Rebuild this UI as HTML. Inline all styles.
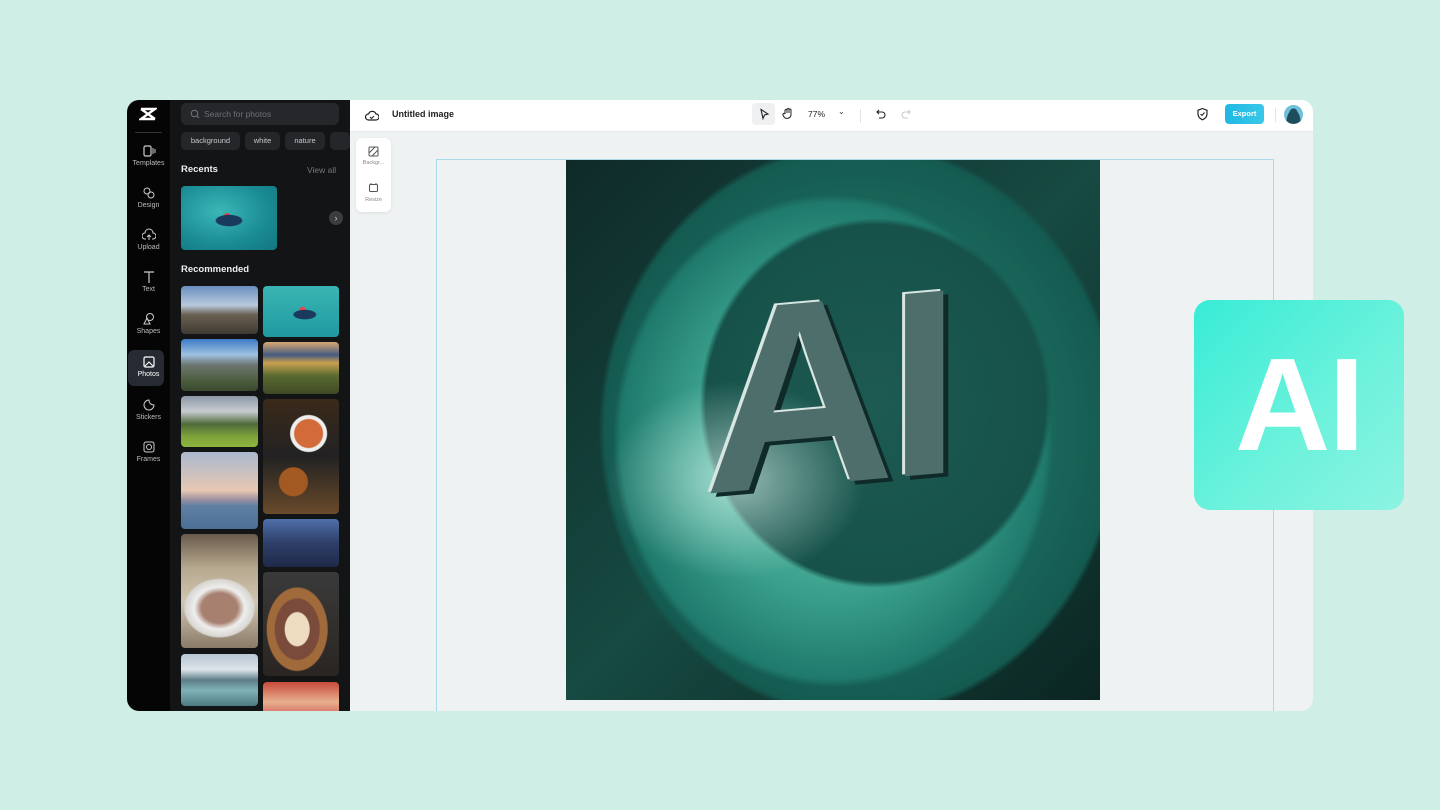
<!DOCTYPE html>
<html><head><meta charset="utf-8"><style>
*{margin:0;padding:0;box-sizing:border-box}
body{width:1440px;height:810px;background:#cfeee6;font-family:"Liberation Sans",sans-serif;position:relative;overflow:hidden}
.app{position:absolute;left:127px;top:100px;width:1186px;height:611px;border-radius:12px;overflow:hidden;background:#eef2f3}
.rail{position:absolute;left:0;top:0;width:43px;height:611px;background:#050505}
.panel{position:absolute;left:43px;top:0;width:180px;height:611px;background:#131416}
.top{position:absolute;left:223px;top:0;right:0;height:32px;background:#fff;border-bottom:1px solid #e6eaec}
.ri{position:absolute;left:0;width:43px;text-align:center;color:#bbb;font-size:7px}
.ri svg{display:block;margin:0 auto 2px}
.ph{position:absolute;border-radius:4px;overflow:hidden}
.chip{position:absolute;top:32px;height:18px;border-radius:5px;background:#24262a;color:#c8c8c8;font-size:7.5px;line-height:18px;text-align:center}
</style></head><body>
<div class="app">
 <div class="rail">
  <svg style="position:absolute;left:12px;top:7px" width="18" height="14" viewBox="0 0 18 14"><path d="M2 2h14L2 12h14M2 2l14 10" stroke="#fff" stroke-width="2.4" fill="none"/></svg>
  <div style="position:absolute;left:8px;top:32px;width:27px;height:1px;background:#333"></div>
  <div class="ri" style="top:44px"><svg width="14" height="14" viewBox="0 0 14 14"><rect x="2" y="2" width="7" height="10" rx="1.5" stroke="#ccc" fill="none" stroke-width="1.2"/><path d="M11 4v6M13 5v4" stroke="#ccc"/></svg>Templates</div>
  <div class="ri" style="top:86px"><svg width="14" height="14" viewBox="0 0 14 14"><circle cx="5" cy="5" r="3" stroke="#ccc" fill="none"/><circle cx="9" cy="9" r="3" stroke="#ccc" fill="none"/></svg>Design</div>
  <div class="ri" style="top:128px"><svg width="14" height="14" viewBox="0 0 14 14"><path d="M4 11H3a3 3 0 0 1 0-6 4 4 0 0 1 8 0 3 3 0 0 1 0 6h-1M7 12V7M5 9l2-2 2 2" stroke="#ccc" fill="none"/></svg>Upload</div>
  <div class="ri" style="top:170px"><svg width="14" height="14" viewBox="0 0 14 14"><path d="M2 2h10M7 2v11" stroke="#ccc" fill="none" stroke-width="1.2"/></svg>Text</div>
  <div class="ri" style="top:212px"><svg width="14" height="14" viewBox="0 0 14 14"><circle cx="8" cy="5" r="3.5" stroke="#ccc" fill="none"/><path d="M2 12l3-6 3 6z" stroke="#ccc" fill="none"/></svg>Shapes</div>
  <div style="position:absolute;left:1px;top:250px;width:36px;height:36px;border-radius:6px;background:#262b33"></div>
  <div class="ri" style="top:255px;color:#fff"><svg width="14" height="14" viewBox="0 0 14 14"><rect x="2" y="2" width="10" height="10" rx="1.5" stroke="#fff" fill="none" stroke-width="1.2"/><path d="M3 11l4-4 4 4" stroke="#fff" fill="none"/></svg>Photos</div>
  <div class="ri" style="top:298px"><svg width="14" height="14" viewBox="0 0 14 14"><path d="M7 2a5 5 0 1 0 5 5c-3 0-5-2-5-5z" stroke="#ccc" fill="none"/></svg>Stickers</div>
  <div class="ri" style="top:340px"><svg width="14" height="14" viewBox="0 0 14 14"><rect x="2" y="2" width="10" height="10" rx="2" stroke="#ccc" fill="none"/><circle cx="7" cy="7" r="2.5" stroke="#ccc" fill="none"/></svg>Frames</div>
 </div>
 <div class="panel">
  <div style="position:absolute;left:11px;top:3px;width:158px;height:22px;border-radius:5px;background:#25272b;color:#6d6f74;font-size:8.5px;line-height:22px;padding-left:23px">Search for photos
   <svg style="position:absolute;left:9px;top:6px" width="10" height="10" viewBox="0 0 10 10"><circle cx="4.5" cy="4.5" r="3.3" stroke="#777" fill="none"/><path d="M7 7l2 2" stroke="#777"/></svg></div>
  <div class="chip" style="left:11px;width:59px">background</div>
  <div class="chip" style="left:75px;width:35px">white</div>
  <div class="chip" style="left:115px;width:40px">nature</div>
  <div class="chip" style="left:160px;width:20px"></div>
  <div style="position:absolute;left:11px;top:64px;color:#eee;font-size:9.5px;font-weight:bold">Recents</div>
  <div style="position:absolute;left:137px;top:65px;color:#777;font-size:8.5px">View all</div>
  <div class="ph" style="left:11px;top:86px;width:96px;height:64px;background:radial-gradient(ellipse 14px 6px at 50% 54%,#1a3a5c 0 90%,transparent 100%),radial-gradient(circle at 48% 48%,#e33 0 3px,transparent 4px),radial-gradient(ellipse at 40% 40%,#3bb8b8,#1a8b93 60%,#137680)"></div>
  <div style="position:absolute;left:159px;top:111px;width:14px;height:14px;border-radius:7px;background:#3a3c40;color:#ccc;font-size:9px;text-align:center;line-height:14px">›</div>
  <div style="position:absolute;left:11px;top:164px;color:#eee;font-size:9.5px;font-weight:bold">Recommended</div>
  <div class="ph" style="left:11px;top:186px;width:77px;height:48px;background:linear-gradient(#6a8fc0,#b8c9dc 40%,#6a6050 60%,#3e3a33)"></div>
  <div class="ph" style="left:11px;top:239px;width:77px;height:52px;background:linear-gradient(#3c7ac4,#9ec1e2 30%,#6d7570 50%,#4b5d3d 80%,#3a4a30)"></div>
  <div class="ph" style="left:11px;top:296px;width:77px;height:51px;background:linear-gradient(#8a98a6,#c8ccd0 30%,#4f6a3a 55%,#7ea43a 80%,#8db53d)"></div>
  <div class="ph" style="left:11px;top:352px;width:77px;height:77px;background:linear-gradient(#a9b8cf,#e8c8b2 50%,#9a8fa0 62%,#5f7fa3 70%,#4c6f96)"></div>
  <div class="ph" style="left:11px;top:434px;width:77px;height:114px;background:radial-gradient(ellipse 36px 30px at 50% 65%,#a88070 0 50%,#eee 70%,#d8d6d2 95%,transparent 100%),linear-gradient(#6a5a4a,#b7a890 30%,#d2c6b0 60%,#8a7a68)"></div>
  <div class="ph" style="left:11px;top:554px;width:77px;height:52px;background:linear-gradient(#b8c6d4,#dde4ea 30%,#5d7d88 50%,#7fb2b8 70%,#4e7a82)"></div>
  <div class="ph" style="left:93px;top:186px;width:76px;height:51px;background:radial-gradient(ellipse 12px 5px at 55% 56%,#1a3a5c 0 90%,transparent 100%),radial-gradient(circle at 52% 48%,#e44 0 3px,transparent 4px),linear-gradient(#3ab5b3,#1f9aa0)"></div>
  <div class="ph" style="left:93px;top:242px;width:76px;height:52px;background:linear-gradient(#d8a870,#455a80 25%,#c9a050 40%,#5a6a30 65%,#3f4a25)"></div>
  <div class="ph" style="left:93px;top:299px;width:76px;height:115px;background:radial-gradient(circle at 60% 30%,#d36a3a 0 14px,#eee 15px 18px,transparent 19px),radial-gradient(circle at 40% 72%,#a35a22 0 14px,transparent 15px),linear-gradient(#3a2a1a,#222 50%,#6a4a2a)"></div>
  <div class="ph" style="left:93px;top:419px;width:76px;height:48px;background:linear-gradient(#4f6fa8,#2e3f6a 50%,#1e2a48)"></div>
  <div class="ph" style="left:93px;top:472px;width:76px;height:104px;background:radial-gradient(ellipse at 45% 55%,#eedcc0 0 12px,#7a4a3a 13px 22px,#a06a3a 23px 30px,transparent 31px),linear-gradient(#3a3a3a,#2a2522)"></div>
  <div class="ph" style="left:93px;top:582px;width:76px;height:40px;background:linear-gradient(#c74a3a,#e8b090 50%,#c44)"></div>
 </div>
 <div class="top">
  <svg style="position:absolute;left:15px;top:9px" width="14" height="14" viewBox="0 0 14 14"><path d="M4 11H3.5a3 3 0 0 1 0-6 4 4 0 0 1 7.5 0 3 3 0 0 1 0 6H4z" stroke="#222" fill="none" stroke-width="1.2"/><path d="M5 8l1.5 1.5L9 7" stroke="#222" fill="none"/></svg>
  <div style="position:absolute;left:42px;top:9px;font-size:9px;font-weight:bold;color:#222">Untitled image</div>
  <div style="position:absolute;left:402px;top:3px;width:23px;height:22px;border-radius:4px;background:#eef0f2"></div>
  <svg style="position:absolute;left:408px;top:8px" width="12" height="12" viewBox="0 0 12 12"><path d="M3 1.5l7 4.5-3.5 1-1.5 3.5z" stroke="#222" fill="none" stroke-width="1.1"/></svg>
  <svg style="position:absolute;left:432px;top:7px" width="12" height="13" viewBox="0 0 12 13"><path d="M3 7V3.5a1 1 0 0 1 2 0V6V2.5a1 1 0 0 1 2 0V6V3a1 1 0 0 1 2 0v5a4 4 0 0 1-7 2L1 8a1 1 0 0 1 2-1" stroke="#222" fill="none"/></svg>
  <div style="position:absolute;left:458px;top:9px;font-size:8.5px;color:#222">77%</div>
  <div style="position:absolute;left:488px;top:7px;font-size:8px;color:#333">⌄</div>
  <div style="position:absolute;left:510px;top:9px;width:1px;height:14px;background:#e3e3e3"></div>
  <svg style="position:absolute;left:524px;top:8px" width="12" height="12" viewBox="0 0 12 12"><path d="M3 4h5a3 3 0 0 1 0 6H5M5 2L3 4l2 2" stroke="#222" fill="none" stroke-width="1.1"/></svg>
  <svg style="position:absolute;left:551px;top:8px" width="12" height="12" viewBox="0 0 12 12"><path d="M9 4H4a3 3 0 0 0 0 6h3M7 2l2 2-2 2" stroke="#ccc" fill="none" stroke-width="1.1"/></svg>
  <svg style="position:absolute;left:846px;top:7px" width="13" height="14" viewBox="0 0 13 14"><path d="M6.5 1.5l4.5 1.8v3.5c0 3-2 5-4.5 6-2.5-1-4.5-3-4.5-6V3.3z" stroke="#222" fill="none" stroke-width="1.2"/><path d="M4.5 7l1.5 1.5 2.5-3" stroke="#222" fill="none"/></svg>
  <div style="position:absolute;left:875px;top:4px;width:39px;height:20px;border-radius:4px;background:linear-gradient(90deg,#1fb8e4,#3ac8e8);color:#fff;font-size:7.5px;font-weight:bold;text-align:center;line-height:20px">Export</div>
  <div style="position:absolute;left:925px;top:8px;width:1px;height:14px;background:#e3e3e3"></div>
  <div style="position:absolute;left:934px;top:5px;width:19px;height:19px;border-radius:50%;background:radial-gradient(circle at 50% 38%,#1e4d5c 0 3.5px,transparent 4px),radial-gradient(ellipse at 50% 100%,#1e4d5c 0 7px,transparent 7.5px),#6cc0dc"></div>
 </div>
 <div style="position:absolute;left:229px;top:38px;width:35px;height:74px;border-radius:6px;background:#fff;box-shadow:0 1px 3px rgba(0,0,0,.08)">
  <svg style="position:absolute;left:12px;top:8px" width="11" height="11" viewBox="0 0 11 11"><rect x="1" y="1" width="9" height="9" rx="1" stroke="#555" fill="none"/><path d="M1 7l6-6M4 10l6-6" stroke="#555"/></svg>
  <div style="position:absolute;top:22px;width:35px;text-align:center;font-size:5.5px;color:#888">Backgr...</div>
  <svg style="position:absolute;left:12px;top:44px" width="11" height="11" viewBox="0 0 11 11"><rect x="1.5" y="2.5" width="8" height="7" rx="1" stroke="#555" fill="none"/><path d="M3 1v2M8 1v2" stroke="#555"/></svg>
  <div style="position:absolute;top:59px;width:35px;text-align:center;font-size:5.5px;color:#888">Resize</div>
 </div>
 <div style="position:absolute;left:309px;top:59px;width:838px;height:560px;border:1px solid #a8dcea"></div>
 <div style="position:absolute;left:439px;top:60px;width:534px;height:540px;overflow:hidden;background:
  radial-gradient(ellipse 200px 210px at 58% 45%,#1d5a52 0,#16524a 85%,transparent 88%),
  radial-gradient(ellipse 250px 280px at 50% 52%,#6fc8b4 0,#3aa08c 55%,#1f7a6c 85%,transparent 88%),
  radial-gradient(ellipse 290px 320px at 55% 50%,#2a8a7a 0,#145a50 88%,transparent 90%),
  linear-gradient(135deg,#0f2a28,#164a42 50%,#0b2522)">
  <div style="position:absolute;left:40px;top:220px;width:260px;height:200px;background:radial-gradient(ellipse,rgba(230,255,248,.6),transparent 70%)"></div>
  <div style="position:absolute;left:138px;top:80px;font-size:265px;font-weight:bold;color:#4e6e6c;letter-spacing:-8px;text-shadow:-3px -2px 0 #d8e6e2,5px 4px 0 #0f2a28;transform:skewY(-5deg)">AI</div>
 </div>
</div>
<div style="position:absolute;left:1194px;top:300px;width:210px;height:210px;border-radius:16px;background:linear-gradient(135deg,#38ecd6,#6ff2dc 60%,#8cf3e2);color:#fff;font-size:132px;font-weight:bold;text-align:center;line-height:210px;letter-spacing:-2px">AI</div>
</body></html>
